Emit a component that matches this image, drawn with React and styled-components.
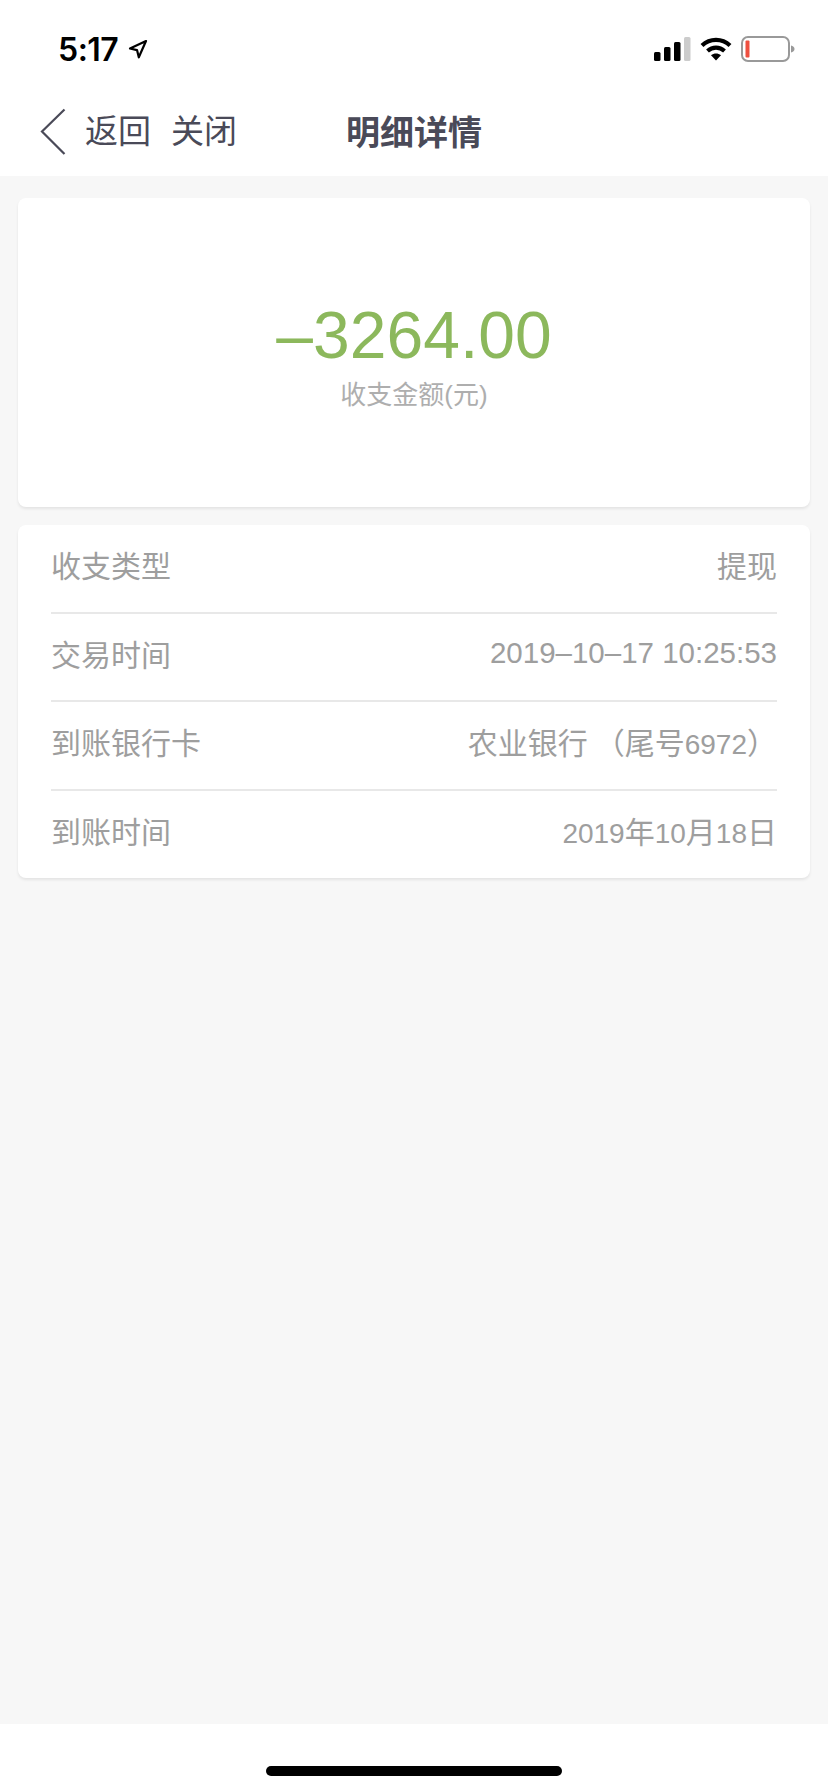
import React from "react";
import styled, { createGlobalStyle } from "styled-components";

const FONT = '"Liberation Sans", "Noto Sans CJK SC", sans-serif';

const GlobalStyle = createGlobalStyle`
  html, body {
    margin: 0;
    padding: 0;
    background: #f7f7f7;
  }
  * {
    box-sizing: border-box;
  }
`;

const Page = styled.div`
  width: 828px;
  height: 1792px;
  display: flex;
  flex-direction: column;
  background: #f7f7f7;
  font-family: ${FONT};
`;

const StatusBar = styled.div`
  height: 88px;
  padding: 10px 33px 0 58px;
  display: flex;
  align-items: center;
  justify-content: space-between;
  background: #fff;
`;

const Time = styled.div`
  display: flex;
  align-items: center;
  gap: 10px;
  font-family: Inter, ${FONT};
  font-size: 32px;
  font-weight: 600;
  letter-spacing: -0.5px;
  color: #000;
`;

const StatusIcons = styled.div`
  display: flex;
  align-items: center;
  gap: 9px;
`;

const NavBar = styled.div`
  position: relative;
  height: 88px;
  display: flex;
  align-items: center;
  padding-left: 40px;
  background: #fff;
  color: #4a4a58;
`;

const NavLink = styled.span`
  font-size: 33px;
  margin-left: ${(p) => p.$gap}px;
  margin-bottom: 6px;
`;

const NavTitle = styled.div`
  position: absolute;
  left: 346px;
  top: 21px;
  font-size: 34px;
  font-weight: 700;
  line-height: 48px;
`;

const Content = styled.div`
  flex: 1;
  padding: 22px 18px 0;
  display: flex;
  flex-direction: column;
  gap: 18px;
`;

const Card = styled.div`
  background: #fff;
  border-radius: 8px;
  box-shadow: 0 2px 3px rgba(0, 0, 0, 0.08);
`;

const AmountCard = styled(Card)`
  height: 309px;
  display: flex;
  flex-direction: column;
  align-items: center;
  padding-top: 104px;
`;

const Amount = styled.div`
  font-size: 66px;
  line-height: 66px;
  color: #8cb85c;
`;

const AmountLabel = styled.div`
  margin-top: 9px;
  font-size: 26px;
  line-height: 36px;
  color: #aeaeae;
`;

const DetailCard = styled(Card)`
  padding: 0 33px;
`;

const Row = styled.div`
  height: ${(p) => (p.$last ? 87 : 88.5)}px;
  padding-bottom: 8px;
  display: flex;
  align-items: center;
  justify-content: space-between;
  border-bottom: ${(p) => (p.$last ? "none" : "2px solid #e8e8e8")};
  font-size: 30px;
  color: #9e9e9e;
`;

const Num = styled.span`
  font-size: 28px;
`;

const Stamp = styled.span`
  font-size: 29.5px;
`;

const CardTail = styled.span`
  margin-left: 7px;
`;

const LocationIcon = () => (
  <svg width="20" height="20" viewBox="0 0 20 20" fill="none">
    <path d="M18 2 2 9.5l7 1.6 1.8 7.2L18 2Z" stroke="#000" strokeWidth="2.2" strokeLinejoin="round" />
  </svg>
);

const SignalIcon = () => (
  <svg width="37" height="24" viewBox="0 0 37 24">
    <rect x="0" y="15" width="6.5" height="9" rx="1.5" fill="#000" />
    <rect x="10" y="10" width="6.5" height="14" rx="1.5" fill="#000" />
    <rect x="20" y="5" width="6.5" height="19" rx="1.5" fill="#000" />
    <rect x="30" y="0" width="6.5" height="24" rx="1.5" fill="#ccc" />
  </svg>
);

const WifiIcon = () => (
  <svg width="32" height="24" viewBox="0 0 32 24" fill="none">
    <path d="M2 8.5C10 1 22 1 30 8.5" stroke="#000" strokeWidth="4.2" />
    <path d="M7.5 14C12.5 9.6 19.5 9.6 24.5 14" stroke="#000" strokeWidth="4.2" />
    <path d="M11 18.2 16 23.5l5-5.3c-3-2.4-7-2.4-10 0Z" fill="#000" />
  </svg>
);

const BatteryIcon = () => (
  <svg width="54" height="26" viewBox="0 0 54 26" fill="none">
    <rect x="1" y="1" width="47" height="24" rx="6" stroke="#999" strokeWidth="2" />
    <rect x="4.5" y="4.5" width="4" height="17" rx="1" fill="#ee5040" />
    <path d="M50 9.5c2 .5 3.5 1.7 3.5 3.5s-1.5 3-3.5 3.5Z" fill="#999" />
  </svg>
);

const BackIcon = () => (
  <svg width="26" height="48" viewBox="0 0 26 48" fill="none">
    <path d="M24.5 1.500 2 23.500l22.500 22.500" stroke="#4a4a58" strokeWidth="2.2" />
  </svg>
);

const Footer = styled.div`
  height: 68px;
  display: flex;
  justify-content: center;
  padding-top: 42px;
  background: #fff;
`;

const HomeBar = styled.div`
  width: 296px;
  height: 10px;
  border-radius: 5px;
  background: #000;
`;

const rows = [
  { label: "收支类型", value: "提现" },
  { label: "交易时间", value: <Stamp>2019–10–17 10:25:53</Stamp> },
  {
    label: "到账银行卡",
    value: (
      <>
        农业银行<CardTail>（尾号<Num>6972</Num>）</CardTail>
      </>
    ),
  },
  {
    label: "到账时间",
    value: (
      <>
        <Num>2019</Num>年<Num>10</Num>月<Num>18</Num>日
      </>
    ),
  },
];

export default function App() {
  return (
    <Page>
      <GlobalStyle />
      <StatusBar>
        <Time>
          5:17
          <LocationIcon />
        </Time>
        <StatusIcons>
          <SignalIcon />
          <WifiIcon />
          <BatteryIcon />
        </StatusIcons>
      </StatusBar>
      <NavBar>
        <BackIcon />
        <NavLink $gap={19}>返回</NavLink>
        <NavLink $gap={20}>关闭</NavLink>
        <NavTitle>明细详情</NavTitle>
      </NavBar>
      <Content>
        <AmountCard>
          <Amount>–3264.00</Amount>
          <AmountLabel>收支金额(元)</AmountLabel>
        </AmountCard>
        <DetailCard>
          {rows.map((row, i) => (
            <Row key={row.label} $last={i === rows.length - 1}>
              <span>{row.label}</span>
              <span>{row.value}</span>
            </Row>
          ))}
        </DetailCard>
      </Content>
      <Footer>
        <HomeBar />
      </Footer>
    </Page>
  );
}
